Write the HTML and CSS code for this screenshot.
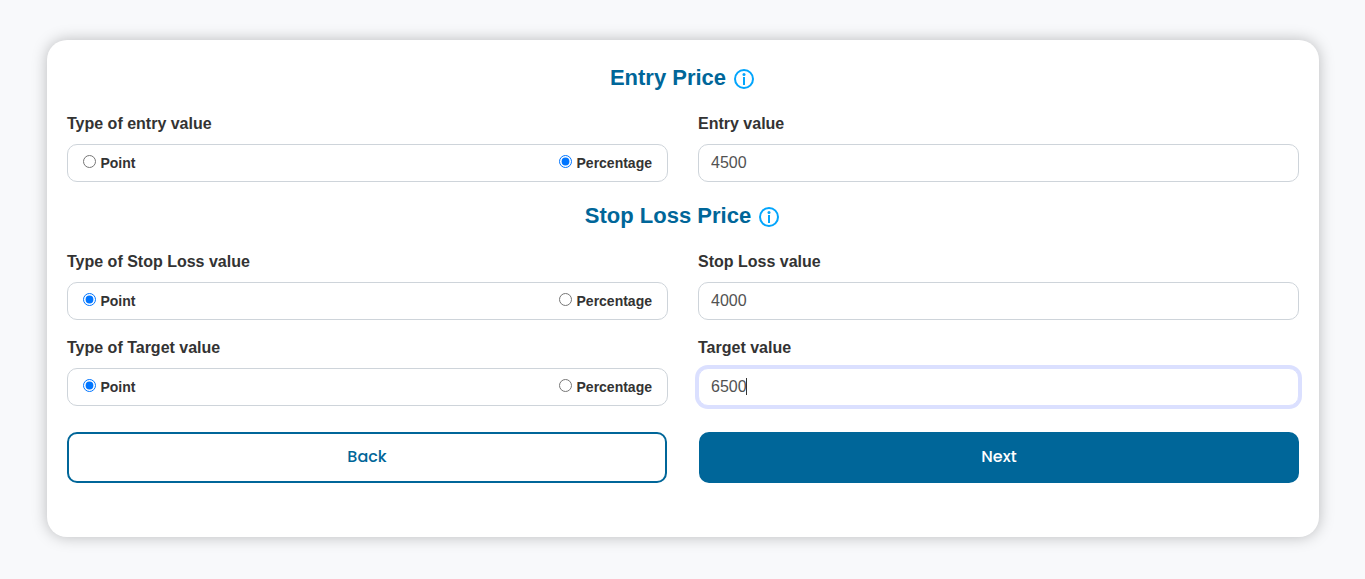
FILE: index.html
```html
<!DOCTYPE html>
<html lang="en">

<head>
    <meta charset="UTF-8">
    <meta name="viewport" content="width=device-width, initial-scale=1.0">
    <title>Entry Price</title>
    <link rel="stylesheet" href="styles.css">
</head>

<body>

    <form class="card" id="priceForm">
        <h2 class="title">Entry Price
            <svg class="info-icon" viewBox="0 0 20 20" aria-hidden="true">
                <circle class="ring" cx="10" cy="10" r="9" />
                <path d="M10 8v8" />
                <circle class="dot" cx="10" cy="5.4" r="1.5" />
            </svg>
        </h2>

        <div class="row">
            <fieldset class="field">
                <legend>Type of entry value</legend>
                <div class="radio-box">
                    <label><input type="radio" name="entryType" value="point"> <span>Point</span></label>
                    <label><input type="radio" name="entryType" value="percentage" checked> <span>Percentage</span></label>
                </div>
            </fieldset>
            <div class="field">
                <label class="field-label" for="entryValue">Entry value</label>
                <input class="text-input" type="text" id="entryValue" value="4500">
            </div>
        </div>

        <h2 class="title">Stop Loss Price
            <svg class="info-icon" viewBox="0 0 20 20" aria-hidden="true">
                <circle class="ring" cx="10" cy="10" r="9" />
                <path d="M10 8v8" />
                <circle class="dot" cx="10" cy="5.4" r="1.5" />
            </svg>
        </h2>

        <div class="row">
            <fieldset class="field">
                <legend>Type of Stop Loss value</legend>
                <div class="radio-box">
                    <label><input type="radio" name="stopLossType" value="point" checked> <span>Point</span></label>
                    <label><input type="radio" name="stopLossType" value="percentage"> <span>Percentage</span></label>
                </div>
            </fieldset>
            <div class="field">
                <label class="field-label" for="stopLossValue">Stop Loss value</label>
                <input class="text-input" type="text" id="stopLossValue" value="4000">
            </div>
        </div>

        <div class="row">
            <fieldset class="field">
                <legend>Type of Target value</legend>
                <div class="radio-box">
                    <label><input type="radio" name="targetType" value="point" checked> <span>Point</span></label>
                    <label><input type="radio" name="targetType" value="percentage"> <span>Percentage</span></label>
                </div>
            </fieldset>
            <div class="field">
                <label class="field-label" for="targetValue">Target value</label>
                <div class="caret-wrap">
                    <input class="text-input" type="text" id="targetValue" value="6500">
                </div>
            </div>
        </div>

        <div class="buttons">
            <button type="button" class="btn btn-back">Back</button>
            <button type="submit" class="btn btn-next">Next</button>
        </div>
    </form>

    <script>
        const target = document.getElementById("targetValue");
        target.focus();
        target.setSelectionRange(target.value.length, target.value.length);

        // back to the native caret once the user types
        target.addEventListener("input", function () {
            this.parentElement.classList.remove("caret-wrap");
        });

        document.getElementById("priceForm").addEventListener("submit", function (event) {
            event.preventDefault();
        });
    </script>

</body>

</html>
```

FILE: styles.css
```css
* {
    margin: 0;
    padding: 0;
    box-sizing: border-box;
}

body {
    background: #f8f9fb;
    color: #333;
    font-family: Arial, "Liberation Sans", sans-serif;
    font-size: 16px;
    line-height: 24px;
    padding: 40px 46px 40px 47px;
}

.card {
    background: #fff;
    padding: 20px 20px 54px;
    border-radius: 20px;
    box-shadow: 0 0 15px rgba(0, 0, 0, 0.25);
}

.title {
    display: flex;
    justify-content: center;
    align-items: center;
    gap: 8px;
    margin-bottom: 16px;
    padding-right: 2px;
    color: #006699;
    font-size: 22px;
    font-weight: 700;
    line-height: 36px;
}

.info-icon {
    width: 20px;
    height: 20px;
    margin-top: 2px;
    fill: none;
    stroke: #03a5fc;
    stroke-width: 2;
}

.info-icon .dot {
    fill: #03a5fc;
    stroke: none;
}

.row {
    display: grid;
    grid-template-columns: 1fr 1fr;
    gap: 30px;
    margin-bottom: 16px;
}

.field {
    min-width: 0;
    border: none;
}

.field legend,
.field-label {
    display: block;
    margin-bottom: 8px;
    font-weight: 700;
}

.radio-box {
    display: flex;
    justify-content: space-between;
    height: 38px;
    padding: 6px 15px;
    border: 1px solid #ced4da;
    border-radius: 10px;
}

.radio-box span {
    font-size: 14px;
    font-weight: 700;
}

.text-input {
    display: block;
    width: 100%;
    height: 38px;
    padding: 6px 12px;
    border: 1px solid #ced4da;
    border-radius: 10px;
    background: #fff;
    color: #525252;
    font-family: inherit;
    font-size: 16px;
}

.text-input:focus {
    border-color: #dbe0ff;
    outline: none;
    box-shadow: 0 0 0 3px #dbe0ff;
}

/* text cursor after the value */
.caret-wrap {
    position: relative;
}

.caret-wrap .text-input {
    caret-color: transparent;
}

.caret-wrap:focus-within::after {
    content: "";
    position: absolute;
    top: 10px;
    left: 48px;
    width: 1px;
    height: 17px;
    background: #333;
}

.buttons {
    display: grid;
    grid-template-columns: 1fr 1fr;
    gap: 32px;
    margin-top: 26px;
}

.btn {
    height: 51px;
    padding-bottom: 2px;
    border: 2px solid #006699;
    border-radius: 10px;
    font-family: Poppins, Inter, sans-serif;
    font-size: 16px;
    font-weight: 500;
    cursor: pointer;
}

.btn-back {
    background: #fff;
    color: #006699;
}

.btn-next {
    background: #006699;
    color: #fff;
}
```
